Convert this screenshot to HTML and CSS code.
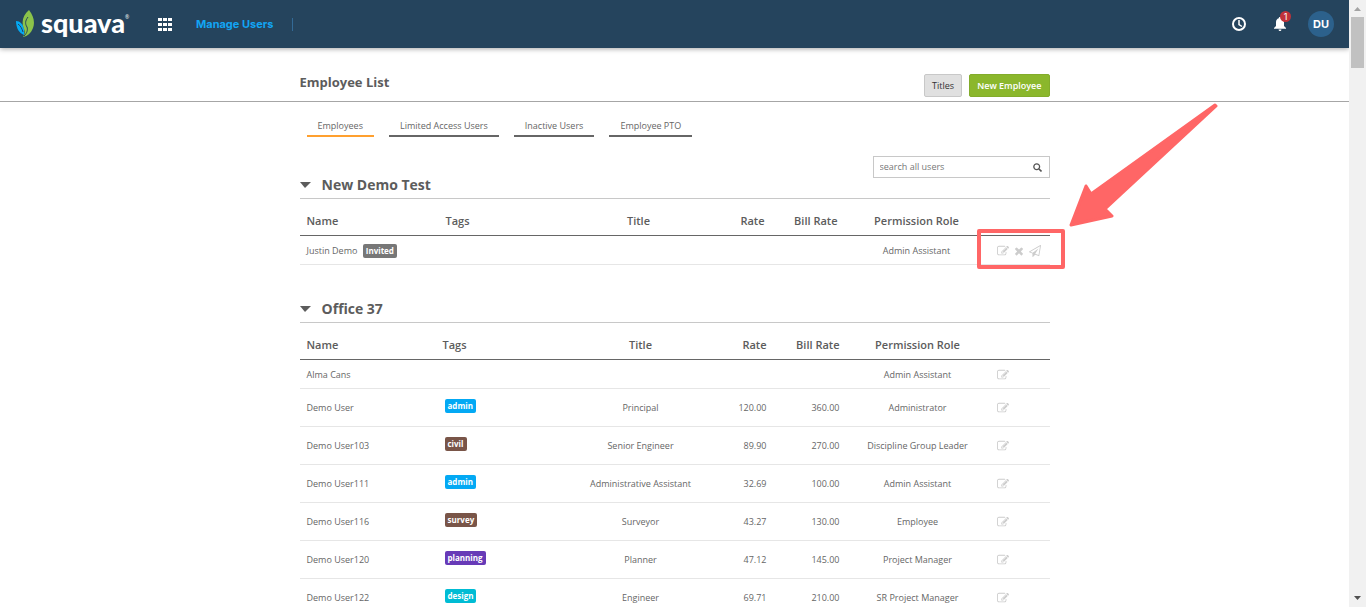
FILE: index.html
```
<!DOCTYPE html>
<html lang="en">
<head>
<meta charset="utf-8">
<title>Manage Users</title>
<link rel="stylesheet" href="styles.css">
</head>
<body>
<svg class="sprite" aria-hidden="true">
  <symbol id="edit" viewBox="0 0 1792 1792"><path d="M888 1184l116-116-152-152-116 116v56h96v96h56zm440-720q-16-16-33 1l-350 350q-17 17-1 33t33-1l350-350q17-17 1-33zm80 594v190q0 119-84.500 203.500t-203.500 84.500h-832q-119 0-203.500-84.500t-84.500-203.500v-832q0-119 84.500-203.500t203.500-84.500h832q63 0 117 25 15 7 18 23 3 17-9 29l-49 49q-14 14-32 8-23-6-45-6h-832q-66 0-113 47t-47 113v832q0 66 47 113t113 47h832q66 0 113-47t47-113v-126q0-13 9-22l64-64q15-15 35-7t20 29zm-96-738l288 288-672 672h-288v-288zm444 132l-92 92-288-288 92-92q28-28 68-28t68 28l152 152q28 28 28 68t-28 68z"/></symbol>
  <symbol id="remove" viewBox="0 0 1792 1792"><path d="M1490 1322q0 40-28 68l-136 136q-28 28-68 28t-68-28l-294-294-294 294q-28 28-68 28t-68-28l-136-136q-28-28-28-68t28-68l294-294-294-294q-28-28-28-68t28-68l136-136q28-28 68-28t68 28l294 294 294-294q28-28 68-28t68 28l136 136q28 28 28 68t-28 68l-294 294 294 294q28 28 28 68z"/></symbol>
  <symbol id="send" viewBox="0 0 1792 1792"><path d="M1764 11q33 24 27 64l-256 1536q-5 29-32 45-14 8-31 8-11 0-24-5l-527-215-298 327q-18 21-47 21-14 0-23-4-19-7-30-23.500t-11-36.500v-452l-472-193q-37-14-40-55-3-39 32-59l1664-960q35-21 68 2zm-342 1499l221-1323-1434 827 336 137 863-639-478 797z"/></symbol>
</svg>
<div class="app">
  <div class="page">
    <header class="topbar">
      <a class="logo" href="#">
        <svg class="leaf" viewBox="0 0 18 27" aria-hidden="true">
          <path fill="#03a9f4" d="M0 11C4 11 7 14 8 19l0 6C3 23 0 18 0 11z"/>
          <path fill="#8bc34a" d="M13 0c5 6 6 13 4 18-2 5-5 8-10 9 2-3 2-5 1-8C5 12 7 5 13 0z"/>
          <path fill="none" stroke="#25445d" d="M12 7c-3 4-3 7-1 10 1 3 0 6-3 9M2 14c3 2 4 5 5 8"/>
        </svg>
        <span class="wordmark">squava</span><span class="mark">®</span>
      </a>
      <button class="apps" aria-label="Apps">
        <svg width="14" height="13" viewBox="0 0 14 13" fill="#fff"><path d="M0 0h4v3H0zM5 0h4v3H5zM10 0h4v3h-4zM0 5h4v3H0zM5 5h4v3H5zM10 5h4v3h-4zM0 10h4v3H0zM5 10h4v3H5zM10 10h4v3h-4z"/></svg>
      </button>
      <a class="current" href="#">Manage Users</a>
      <div class="tools">
        <button class="tool" aria-label="Time">
          <svg width="14" height="14" viewBox="0 0 14 14" fill="none" stroke="#fff" stroke-width="2"><circle cx="7" cy="7" r="6"/><path stroke-width="1.500" d="M7 3v4.500l3 2"/></svg>
        </button>
        <button class="tool bell" aria-label="Notifications">
          <svg width="12" height="14" viewBox="0 0 12 14" fill="#fff"><path d="M6 0c.8 0 1.200.5 1.200 1.200C9 1.800 10 3.200 10 5.200V9l2 2v.7H0V11l2-2V5.200c0-2 1-3.400 2.800-4C4.800.5 5.200 0 6 0zM4.600 12.500h2.800c0 2-2.800 2-2.800 0z"/></svg>
          <span class="count">1</span>
        </button>
        <button class="avatar">DU</button>
      </div>
    </header>

    <div class="titlebar">
      <div class="container heading">
        <h1>Employee List</h1>
        <div class="actions">
          <button class="btn">Titles</button>
          <button class="btn primary">New Employee</button>
        </div>
      </div>
    </div>

    <main class="container content">
      <nav class="tabs">
        <a class="tab active" href="#">Employees</a>
        <a class="tab" href="#">Limited Access Users</a>
        <a class="tab" href="#">Inactive Users</a>
        <a class="tab" href="#">Employee PTO</a>
      </nav>
      <form class="search">
        <input type="text" placeholder="search all users" aria-label="Search all users">
        <button type="button" aria-label="Search"><svg width="9" height="9" viewBox="0 0 9 9" fill="none" stroke="#555"><circle cx="3.700" cy="3.700" r="2.900" stroke-width="1.300"/><path stroke-width="1.600" d="M6 6l2.500 2.500"/></svg></button>
      </form>

      <section class="group">
        <h2><span class="caret"></span>New Demo Test</h2>
        <table>
          <colgroup><col class="a1"><col class="a2"><col class="a3"><col class="a4"><col class="a5"><col class="a6"><col class="a7"></colgroup>
          <thead><tr><th>Name</th><th>Tags</th><th class="mid">Title</th><th class="num">Rate</th><th class="num">Bill Rate</th><th class="mid">Permission Role</th><th></th></tr></thead>
          <tbody>
            <tr class="short"><td>Justin Demo <span class="tag gray">Invited</span></td><td></td><td></td><td></td><td></td><td class="mid">Admin Assistant</td>
              <td class="ops"><div class="icons"><button aria-label="Edit"><svg><use href="#edit"/></svg></button><button aria-label="Remove"><svg><use href="#remove"/></svg></button><button aria-label="Send invite"><svg><use href="#send"/></svg></button></div></td></tr>
          </tbody>
        </table>
      </section>

      <section class="group">
        <h2><span class="caret"></span>Office 37</h2>
        <table>
          <colgroup><col class="b1"><col class="b2"><col class="b3"><col class="b4"><col class="b5"><col class="b6"><col class="b7"></colgroup>
          <thead><tr><th>Name</th><th>Tags</th><th class="mid">Title</th><th class="num">Rate</th><th class="num">Bill Rate</th><th class="mid">Permission Role</th><th></th></tr></thead>
          <tbody>
            <tr class="short"><td>Alma Cans</td><td></td><td></td><td></td><td></td><td class="mid">Admin Assistant</td><td class="ops"><div class="icons"><button aria-label="Edit"><svg><use href="#edit"/></svg></button></div></td></tr>
            <tr><td>Demo User</td><td class="tags"><span class="tag blue">admin</span></td><td class="mid">Principal</td><td class="num">120.00</td><td class="num">360.00</td><td class="mid">Administrator</td><td class="ops"><div class="icons"><button aria-label="Edit"><svg><use href="#edit"/></svg></button></div></td></tr>
            <tr><td>Demo User103</td><td class="tags"><span class="tag brown">civil</span></td><td class="mid">Senior Engineer</td><td class="num">89.90</td><td class="num">270.00</td><td class="mid">Discipline Group Leader</td><td class="ops"><div class="icons"><button aria-label="Edit"><svg><use href="#edit"/></svg></button></div></td></tr>
            <tr><td>Demo User111</td><td class="tags"><span class="tag blue">admin</span></td><td class="mid">Administrative Assistant</td><td class="num">32.69</td><td class="num">100.00</td><td class="mid">Admin Assistant</td><td class="ops"><div class="icons"><button aria-label="Edit"><svg><use href="#edit"/></svg></button></div></td></tr>
            <tr><td>Demo User116</td><td class="tags"><span class="tag brown">survey</span></td><td class="mid">Surveyor</td><td class="num">43.27</td><td class="num">130.00</td><td class="mid">Employee</td><td class="ops"><div class="icons"><button aria-label="Edit"><svg><use href="#edit"/></svg></button></div></td></tr>
            <tr><td>Demo User120</td><td class="tags"><span class="tag purple">planning</span></td><td class="mid">Planner</td><td class="num">47.12</td><td class="num">145.00</td><td class="mid">Project Manager</td><td class="ops"><div class="icons"><button aria-label="Edit"><svg><use href="#edit"/></svg></button></div></td></tr>
            <tr><td>Demo User122</td><td class="tags"><span class="tag cyan">design</span></td><td class="mid">Engineer</td><td class="num">69.71</td><td class="num">210.00</td><td class="mid">SR Project Manager</td><td class="ops"><div class="icons"><button aria-label="Edit"><svg><use href="#edit"/></svg></button></div></td></tr>
          </tbody>
        </table>
      </section>

      <div class="callout"></div>
      <svg class="arrow" viewBox="0 0 149 125" aria-hidden="true"><path d="M2 122L17 83 22 91 146 2 147 3 36 106 43 113z" fill="#ff6666" stroke="#ff6666" stroke-width="3" stroke-linejoin="round"/></svg>
    </main>
  </div>
  <div class="scroll" aria-hidden="true">
    <svg width="7" height="4" viewBox="0 0 7 4"><path fill="#a3a3a3" d="M0 4L3.500 0 7 4z"/></svg>
    <div class="thumb"></div>
    <svg class="down" width="7" height="4" viewBox="0 0 7 4"><path fill="#505050" d="M0 0h7L3.500 4z"/></svg>
  </div>
</div>
</body>
</html>
```
FILE: styles.css
```
* { box-sizing: border-box; }
body { margin: 0; background: #fff; color: #666; font: 9px/14px "Open Sans", sans-serif; }
a { color: inherit; text-decoration: none; }
button { font: inherit; color: inherit; margin: 0; padding: 0; border: 0; background: none; }
svg { display: block; }
.sprite { display: none; }
.app { display: flex; height: 100vh; overflow: hidden; }
.page { flex: 1; min-width: 0; overflow: hidden; }
.container { width: 100%; max-width: 750px; margin: 0 auto; }

.topbar { position: relative; display: flex; align-items: center; height: 48px; padding: 0 15px 0 16px; background: #25445d; box-shadow: 0 1px 5px rgba(0, 0, 0, .35); }
.logo { display: flex; align-items: center; color: #fff; width: 142px; padding-bottom: 2px; }
.leaf { width: 18px; height: 27px; margin-right: 7px; }
.wordmark { font: 900 27px/40px Lato, sans-serif; }
.mark { font-size: 5px; margin-bottom: 12px; }
.current { margin-left: 24px; padding-right: 19px; border-right: 1px solid #336a96; color: #12a5f4; font: 700 11px/13px Inter, sans-serif; }
.tools { display: flex; align-items: center; margin-left: auto; color: #fff; }
.bell { position: relative; margin: 0 22px 0 28px; }
.count { position: absolute; left: 6px; top: -6px; width: 11px; height: 11px; border-radius: 50%; background: #c1323a; font: 9px/11px Inter, sans-serif; text-align: center; }
.avatar { width: 26px; height: 26px; border-radius: 50%; background: #2c618c; font: 700 11px/26px Inter, sans-serif; }

.titlebar { border-bottom: 1px solid #a6a6a6; padding: 14px 0 4px; }
.heading { display: flex; align-items: center; justify-content: space-between; height: 35px; }
h1 { margin: 0; color: #5c5c5c; font-size: 13px; line-height: 18px; font-weight: 700; padding-top: 5px; }
.actions { display: flex; gap: 7px; padding-top: 12px; }
.btn { height: 23px; padding: 0 7px; border: 1px solid #c8c8c8; border-radius: 2px; background: #e0e0e0; color: #333; }
.primary { border-color: #83ac2b; background: #8bb72c; color: #fff; font-weight: 600; }

.content { position: relative; }
.tabs { display: flex; gap: 15px; padding: 15px 7px 0; }
.tab { padding: 2px 11px; border-bottom: 2px solid #666; }
.tab.active { border-color: #ffa02f; }
.search { display: flex; align-items: center; width: 177px; height: 22px; margin: 19px 0 0 auto; padding: 0 7px 0 6px; border: 1px solid #c8c8c8; }
.search input { flex: 1; min-width: 0; border: 0; padding: 0; outline: 0; font: inherit; color: #666; background: none; }
.search input::placeholder { color: #777; opacity: 1; }

.group { margin-bottom: 37px; }
h2 { display: flex; align-items: center; gap: 11px; height: 21px; margin: 0; padding-bottom: 6px; border-bottom: 1px solid #c8c8c8; color: #5c5c5c; font-size: 14px; line-height: 14px; font-weight: 700; }
.caret { border: solid transparent; border-width: 6px 6px 0 5px; border-top-color: #5c5c5c; }
table { width: 100%; table-layout: fixed; border-collapse: separate; border-spacing: 0; }
th, td { padding: 0 7px; text-align: left; vertical-align: middle; white-space: nowrap; }
th { height: 37px; padding-top: 8px; border-bottom: 1px solid #666; color: #5c5c5c; font-size: 11px; font-weight: 600; }
td { height: 38px; border-bottom: 1px solid #e6e6e6; }
.short td { height: 29px; padding-top: 1px; }
.mid { text-align: center; }
.num { text-align: right; }
.tags { padding: 0 9px 4px; }
.ops { padding: 0 0 0 8px; }
.icons { display: flex; gap: 4px; color: #ccc; }
.icons svg { width: 12px; height: 12px; fill: currentColor; }
.tag { display: inline-block; padding: 0 3px; border-radius: 2px; color: #fff; font-size: 8px; line-height: 14px; font-weight: 700; }
.short .tag { margin-left: 3px; }
.gray { background: #777; }
.blue { background: #03a9f4; }
.brown { background: #795548; }
.purple { background: #673ab7; }
.cyan { background: #00bcd4; }
.a1 { width: 139px; } .a2 { width: 121px; } .a3 { width: 158px; } .a4 { width: 54px; } .a5 { width: 73px; } .a6 { width: 144px; } .a7 { width: 61px; }
.b1 { width: 136px; } .b2 { width: 125px; } .b3 { width: 160px; } .b4 { width: 53px; } .b5 { width: 73px; } .b6 { width: 142px; } .b7 { width: 61px; }

.callout { position: absolute; right: -15px; top: 127px; width: 88px; height: 40px; border: 4px solid #ff6666; border-radius: 2px; }
.arrow { position: absolute; right: -168px; top: 1px; width: 149px; height: 125px; }

.scroll { display: flex; flex-direction: column; align-items: center; width: 17px; padding: 7px 0; background: #f1f1f1; }
.thumb { width: 13px; height: 51px; margin-top: 6px; background: #c1c1c1; }
.down { margin-top: auto; }
```
